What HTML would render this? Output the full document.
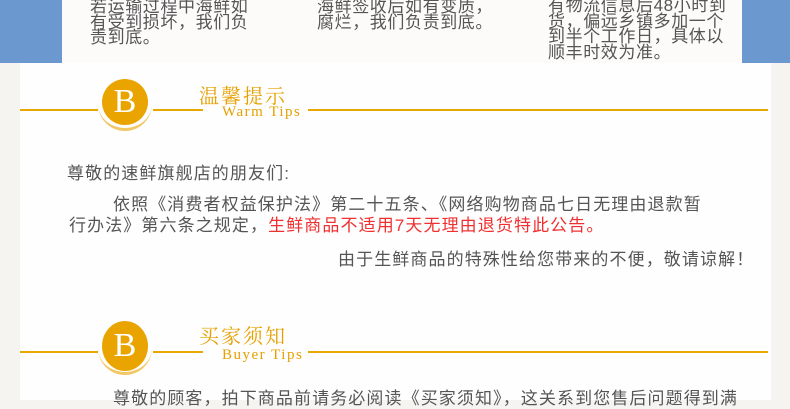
<!DOCTYPE html>
<html><head><meta charset="utf-8"><style>
*{margin:0;padding:0}
body{width:790px;height:400px;overflow:hidden;background:#f5f4f0;position:relative;font-family:"Liberation Sans","Noto Sans CJK SC",sans-serif;}
.a{position:absolute;white-space:nowrap}
.panel{position:absolute;left:20px;top:0;width:751px;height:400px;background:#fefefe}
.t{color:#555;font-size:17px;line-height:15.5px;letter-spacing:0.6px}
.b{color:#555;font-size:17px;letter-spacing:1.1px}
.line{position:absolute;height:2px;background:#e9a800}
.circ{position:absolute;width:46px;height:46px;border-radius:50%;background:#e9a400;color:#fff;font-family:"Liberation Serif",serif;font-size:34px;text-align:center;line-height:46px}
.arc{position:absolute;width:54px;height:54px;border-radius:50%;border-bottom:3px solid #f2c766;box-sizing:border-box}
.ti{color:#e6a000;font-size:20px;letter-spacing:2px;font-family:"Noto Serif CJK SC",serif}
.en{color:#e6a000;font-size:15px;font-family:"Liberation Serif",serif;letter-spacing:1.5px}
</style></head><body>
<div class="panel"></div>
<div class="a" style="left:0;top:0;width:62px;height:63px;background:#6a98cf"></div>
<div class="a" style="left:742px;top:0;width:48px;height:63px;background:#6a98cf"></div>
<div class="a" style="left:62px;top:0;width:680px;height:63px;background:#fdfafa"></div>
<div class="a t" style="left:90px;top:-1px">若运输过程中海鲜如<br>有受到损坏，我们负<br>责到底。</div>
<div class="a t" style="left:317px;top:-1px">海鲜签收后如有变质，<br>腐烂，我们负责到底。</div>
<div class="a t" style="left:548px;top:-2px">有物流信息后48小时到<br>货，偏远乡镇多加一个<br>到半个工作日，具体以<br>顺丰时效为准。</div>

<div class="line" style="left:20px;top:109px;width:78px"></div>
<div class="line" style="left:153px;top:109px;width:50px"></div>
<div class="line" style="left:308px;top:109px;width:460px"></div>
<div class="arc" style="left:98px;top:77px"></div>
<div class="circ" style="left:102px;top:79px">B</div>
<div class="a ti" style="left:199px;top:80px">温馨提示</div>
<div class="a en" style="left:222px;top:104px">Warm Tips</div>

<div class="a b" style="left:67px;top:159px">尊敬的速鲜旗舰店的朋友们:</div>
<div class="a b" style="left:113px;top:190px">依照《消费者权益保护法》第二十五条、《网络购物商品七日无理由退款暂</div>
<div class="a b" style="left:69px;top:211px">行办法》第六条之规定，<span style="color:#f03030">生鲜商品不适用7天无理由退货特此公告。</span></div>
<div class="a b" style="left:338px;top:245px">由于生鲜商品的特殊性给您带来的不便，敬请谅解！</div>

<div class="line" style="left:20px;top:351px;width:78px"></div>
<div class="line" style="left:153px;top:351px;width:50px"></div>
<div class="line" style="left:308px;top:351px;width:460px"></div>
<div class="arc" style="left:98px;top:321px"></div>
<div class="circ" style="left:102px;top:321px;height:50px;line-height:50px">B</div>
<div class="a ti" style="left:199px;top:320px">买家须知</div>
<div class="a en" style="left:222px;top:347px">Buyer Tips</div>
<div class="a b" style="left:113px;top:384px">尊敬的顾客，拍下商品前请务必阅读《买家须知》，这关系到您售后问题得到满</div>
</body></html>
